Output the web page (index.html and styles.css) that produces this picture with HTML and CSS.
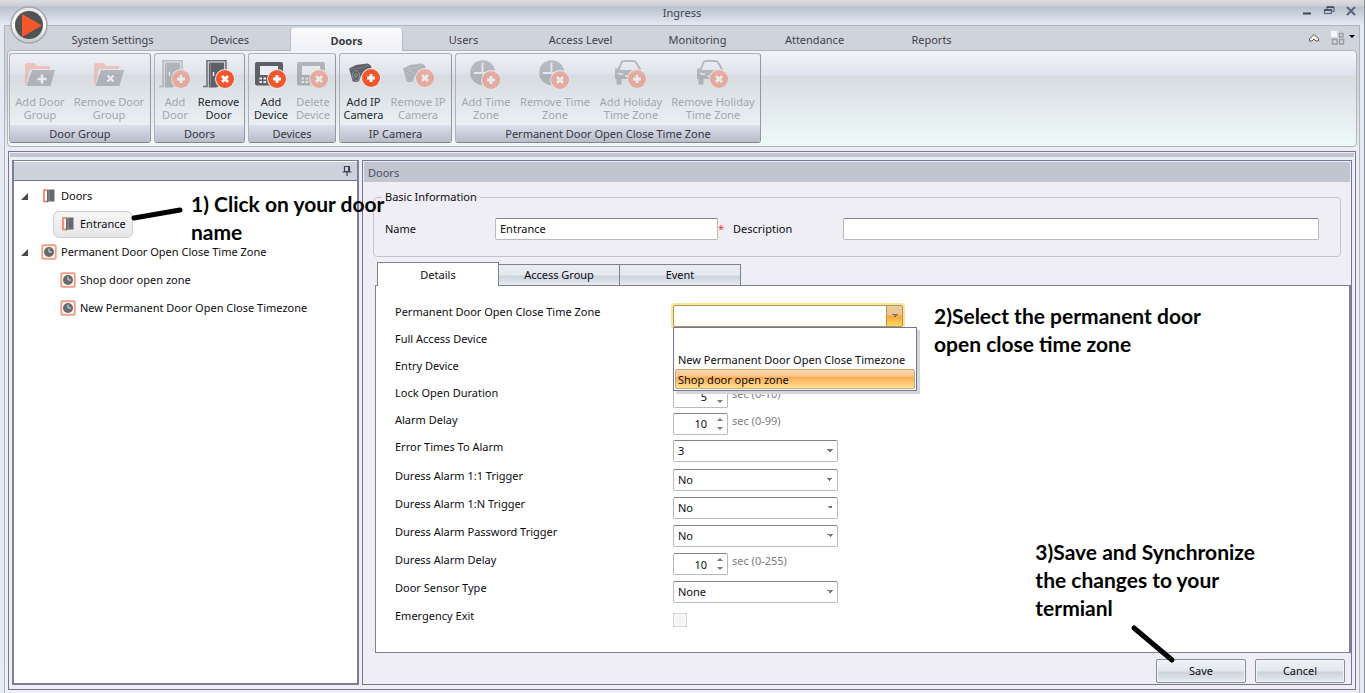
FILE: index.html
```html
<!DOCTYPE html>
<html lang="en">
<head>
<meta charset="utf-8">
<title>Ingress</title>
<link rel="stylesheet" href="styles.css">
</head>
<body>
<svg class="defs" aria-hidden="true">
  <defs>
    <symbol id="b-add" viewBox="0 0 20 20"><circle cx="10" cy="10" r="10" fill="#e8ebf1"/><circle cx="10" cy="10" r="9" fill="#f4562a"/><path d="M10 6v8M6 10h8" stroke="#fff" stroke-width="2.8"/></symbol>
    <symbol id="b-del" viewBox="0 0 20 20"><circle cx="10" cy="10" r="10" fill="#e8ebf1"/><circle cx="10" cy="10" r="9" fill="#f4562a"/><path d="M7 7l6 6M13 7l-6 6" stroke="#fff" stroke-width="2.8"/></symbol>
    <symbol id="folder" viewBox="0 0 32 30"><path d="M1 25V4.500q0-1.500 1.500-1.500h8l2.500 3h13v3H7.500q-1.500 0-2 1.500L2 25z" fill="#f58a6c"/><path d="M8 10h23l-4.500 16H2.500z" fill="#6a6d72"/></symbol>
    <symbol id="door" viewBox="0 0 32 30"><path d="M0 26.500h4V0.800h19V14" fill="none" stroke="#6f7277" stroke-width="1.600"/><path d="M5.800 2.600h15.400V24l-8 3.500H5.800z" fill="#5d6066"/><path d="M7.500 3v24" stroke="#8d9095" stroke-width=".8"/><path d="M10.500 12v4" stroke="#fff" stroke-width="1.400"/></symbol>
    <symbol id="device" viewBox="0 0 32 30"><rect x="0" y="2" width="28" height="23.500" rx="2" fill="#5d6066"/><path d="M5 6h18v6l-4 3H5z" fill="#eceef3"/><path d="M4.500 18.500h2.500M8.500 18.500h2.500M4.500 22h2.500M8.500 22h2.500" stroke="#eceef3" stroke-width="2.200"/></symbol>
    <symbol id="camera" viewBox="0 0 32 30"><path d="M1 8.500L8 5 19 3.500q4 0 5 6l-11 6-2 5.500q-4 2-6.500 0L3 15z" fill="#5d6066"/><path d="M2 9.500l13-2 6-3" fill="none" stroke="#83868b" stroke-width=".8"/><ellipse cx="8" cy="15.500" rx="3.500" ry="5" fill="#5d6066" stroke="#a0a3a8" stroke-width=".8"/><circle cx="8" cy="15.500" r="1.500" fill="none" stroke="#a0a3a8" stroke-width=".8"/></symbol>
    <symbol id="clock" viewBox="0 0 32 30"><circle cx="12.700" cy="12.700" r="12.500" fill="#6a6d72"/><path d="M12.500 2.500v10.500H4M13 13h9" fill="none" stroke="#e8ebf1" stroke-width="1.800"/></symbol>
    <symbol id="car" viewBox="0 0 32 30"><path d="M3.500 10L6.500 2.500Q7 1 9 1h9q2 0 3 1.500L25 9" fill="none" stroke="#6a6d72" stroke-width="2"/><path d="M0 8.500h3l1 1.500h19l1-1.500h2V19H6.500v5.500H1.500V19H0z" fill="#6a6d72"/><path d="M3 13.500l5 1M10 16h10" stroke="#e8ebf1" stroke-width="1.600"/></symbol>
    <symbol id="t-door" viewBox="0 0 16 16"><path d="M7 2H3v11.500h4" fill="none" stroke="#f27a5a" stroke-width="1.600"/><path d="M6 2.500L8 1.500h5.500v12H8L6 14.500z" fill="#66696d"/><path d="M8 2v12" stroke="#989a9d" stroke-width=".8"/></symbol>
    <symbol id="t-clock" viewBox="0 0 16 16"><rect x="1.200" y="1.200" width="13.600" height="13.600" rx="1" fill="#fbf3f1" stroke="#f39a80" stroke-width="1.700"/><circle cx="8" cy="8" r="5" fill="#66696d"/><path d="M8 4.500V8h3" fill="none" stroke="#e4e4e4"/></symbol>
  </defs>
</svg>

<div class="app">
  <header class="titlebar">
    <span class="title">Ingress</span>
    <div class="wincontrols">
      <button aria-label="Minimize"><svg width="12" height="12" viewBox="0 0 12 12"><path d="M2 8.500h8" stroke="#3b4656" stroke-width="2"/></svg></button>
      <button aria-label="Restore"><svg width="12" height="12" viewBox="0 0 12 12"><path d="M4 5V2.500h7v4H9" fill="none" stroke="#5a6b82" stroke-width="1.200"/><rect x="1.500" y="5" width="7" height="3.500" fill="none" stroke="#5a6b82" stroke-width="1.200"/><path d="M3.500 2H11M1 5h8" stroke="#3b4656" stroke-width="1.500"/></svg></button>
      <button aria-label="Close"><svg width="12" height="12" viewBox="0 0 12 12"><path d="M2 2l8 8M10 2l-8 8" stroke="#56657b" stroke-width="2"/></svg></button>
    </div>
  </header>
  <button class="logo" aria-label="Application menu">
    <svg width="40" height="40" viewBox="0 0 40 40"><defs><linearGradient id="ring" x2="0" y2="1"><stop stop-color="#e4e4e4"/><stop offset=".5" stop-color="#fff"/><stop offset="1" stop-color="#c4c5c8"/></linearGradient></defs><circle cx="20" cy="20" r="18" fill="url(#ring)" stroke="#a5a7ac" stroke-width="1.500"/><circle cx="20" cy="20" r="14" fill="#505254"/><path d="M13 9l20 11.500L13 32z" fill="#f4582a"/></svg>
  </button>

  <div class="frame">
    <nav class="tabs">
      <a href="#">System Settings</a><a href="#">Devices</a><a href="#" class="active">Doors</a><a href="#">Users</a><a href="#">Access Level</a><a href="#">Monitoring</a><a href="#">Attendance</a><a href="#">Reports</a>
      <span class="tabtools">
        <button aria-label="Collapse ribbon"><svg width="12" height="10" viewBox="0 0 12 10"><path d="M6 1.500L10.500 6v2H8L6 6 4 8H1.500V6z" fill="#fff6dc" stroke="#4b5563"/></svg></button>
        <button aria-label="View options"><svg width="26" height="16" viewBox="0 0 26 16"><path d="M1 1h6v6H1z" fill="#f8f8f8"/><path d="M9.500 3.500h3.500v3.500H9.500zM2.500 9.500h4.500v4.500H2.500zM9.500 9.500h4v4.500h-4z" fill="#d6d8db" stroke="#9a9ca0" stroke-width="1.400"/><path d="M19 5h6l-3 3z" fill="#000"/></svg></button>
      </span>
    </nav>

    <section class="ribbon">
      <div class="group"><div class="tools">
        <button class="tool w60" disabled><svg class="ico"><use href="#folder"/><path d="M18 14.500v9M13.500 19h9" stroke="#fff" stroke-width="2.600"/></svg>Add Door<br>Group</button>
        <button class="tool w78" disabled><svg class="ico"><use href="#folder"/><path d="M14.500 15.500l6 6M20.500 15.500l-6 6" stroke="#fff" stroke-width="2.400"/></svg>Remove Door<br>Group</button>
      </div><h2>Door Group</h2></div>
      <div class="group"><div class="tools">
        <button class="tool w40" disabled><svg class="ico"><use href="#door"/><use href="#b-add" x="12" y="9" width="20" height="20"/></svg>Add<br>Door</button>
        <button class="tool w47"><svg class="ico"><use href="#door"/><use href="#b-del" x="12" y="9" width="20" height="20"/></svg>Remove<br>Door</button>
      </div><h2>Doors</h2></div>
      <div class="group"><div class="tools">
        <button class="tool w44"><svg class="ico"><use href="#device"/><use href="#b-add" x="12" y="9" width="20" height="20"/></svg>Add<br>Device</button>
        <button class="tool w40" disabled><svg class="ico"><use href="#device"/><use href="#b-del" x="12" y="9" width="20" height="20"/></svg>Delete<br>Device</button>
      </div><h2>Devices</h2></div>
      <div class="group"><div class="tools">
        <button class="tool w47"><svg class="ico"><use href="#camera"/><use href="#b-add" x="13" y="8" width="20" height="20"/></svg>Add IP<br>Camera</button>
        <button class="tool w62" disabled><svg class="ico"><use href="#camera"/><use href="#b-del" x="13" y="8" width="20" height="20"/></svg>Remove IP<br>Camera</button>
      </div><h2>IP Camera</h2></div>
      <div class="group"><div class="tools">
        <button class="tool w60" disabled><svg class="ico"><use href="#clock"/><use href="#b-add" x="11" y="10" width="20" height="20"/></svg>Add Time<br>Zone</button>
        <button class="tool w78" disabled><svg class="ico"><use href="#clock"/><use href="#b-del" x="11" y="10" width="20" height="20"/></svg>Remove Time<br>Zone</button>
        <button class="tool w74" disabled><svg class="ico"><use href="#car"/><use href="#b-add" x="12" y="9" width="20" height="20"/></svg>Add Holiday<br>Time Zone</button>
        <button class="tool w90" disabled><svg class="ico"><use href="#car"/><use href="#b-del" x="12" y="9" width="20" height="20"/></svg>Remove Holiday<br>Time Zone</button>
      </div><h2>Permanent Door Open Close Time Zone</h2></div>
    </section>

    <div class="workspace">
      <div class="strip"></div>
      <div class="panes">
        <aside class="side">
          <div class="sidehead"><svg width="10" height="12" viewBox="0 0 10 12"><path d="M2.500 1.500h5v5h-5zM0.500 7h9M5 7v4" fill="none" stroke="#3f4450" stroke-width="1.200"/><path d="M6 1h2v6H6z" fill="#3f4450"/></svg></div>
          <ul class="tree">
            <li class="root"><i class="arrow"></i><svg class="tico"><use href="#t-door"/></svg>Doors</li>
            <li class="leaf"><span class="node selected"><svg class="tico"><use href="#t-door"/></svg>Entrance</span></li>
            <li class="root"><i class="arrow"></i><svg class="tico"><use href="#t-clock"/></svg>Permanent Door Open Close Time Zone</li>
            <li class="leaf"><span class="node"><svg class="tico"><use href="#t-clock"/></svg>Shop door open zone</span></li>
            <li class="leaf"><span class="node"><svg class="tico"><use href="#t-clock"/></svg>New Permanent Door Open Close Timezone</span></li>
          </ul>
          <div class="callout one"><svg width="54" height="16" viewBox="0 0 54 16"><path d="M3 12L49 4" stroke="#000" stroke-width="5" stroke-linecap="round"/></svg><p>1) Click on your door<br>name</p></div>
        </aside>

        <main class="main">
          <h1>Doors</h1>
          <div class="content">
            <fieldset>
              <legend>Basic Information</legend>
              <label for="name">Name</label>
              <input id="name" class="box namebox" type="text" value="Entrance"><span class="req">*</span>
              <label for="desc">Description</label>
              <input id="desc" class="box descbox" type="text">
            </fieldset>
            <div class="subtabs" role="tablist">
              <button role="tab" aria-selected="true" class="on">Details</button><button role="tab">Access Group</button><button role="tab">Event</button>
            </div>
          </div>
          <form class="details" id="details">
            <div class="row"><label for="pz">Permanent Door Open Close Time Zone</label>
              <div class="combo"><select id="pz" class="box open"><option></option></select>
                <ul class="menu" role="listbox"><li role="option"></li><li role="option">New Permanent Door Open Close Timezone</li><li role="option" class="hot">Shop door open zone</li></ul>
              </div></div>
            <div class="row"><label for="fa">Full Access Device</label><select id="fa" class="box"><option></option></select></div>
            <div class="row"><label for="ed">Entry Device</label><select id="ed" class="box"><option></option></select></div>
            <div class="row"><label for="lo">Lock Open Duration</label><span class="spin"><input id="lo" class="box" type="text" value="5"><i></i></span><span class="unit">sec (0-10)</span></div>
            <div class="row"><label for="ad">Alarm Delay</label><span class="spin"><input id="ad" class="box" type="text" value="10"><i></i></span><span class="unit">sec (0-99)</span></div>
            <div class="row"><label for="et">Error Times To Alarm</label><select id="et" class="box"><option>3</option></select></div>
            <div class="row tall first"><label for="d1">Duress Alarm 1:1 Trigger</label><select id="d1" class="box"><option>No</option></select></div>
            <div class="row tall"><label for="dn">Duress Alarm 1:N Trigger</label><select id="dn" class="box"><option>No</option></select></div>
            <div class="row tall"><label for="dp">Duress Alarm Password Trigger</label><select id="dp" class="box"><option>No</option></select></div>
            <div class="row tall"><label for="dd">Duress Alarm Delay</label><span class="spin"><input id="dd" class="box" type="text" value="10"><i></i></span><span class="unit">sec (0-255)</span></div>
            <div class="row tall"><label for="ds">Door Sensor Type</label><select id="ds" class="box"><option>None</option></select></div>
            <div class="row"><label for="ee">Emergency Exit</label><input id="ee" type="checkbox" disabled></div>
            <div class="callout two"><p>2)Select the permanent door<br>open close time zone</p></div>
          </form>
          <footer class="actions"><button form="details" type="button">Save</button><button type="button">Cancel</button></footer>
          <div class="callout three"><p>3)Save and Synchronize<br>the changes to your<br>termianl</p><svg width="48" height="40" viewBox="0 0 48 40"><path d="M4 4L42 36" stroke="#000" stroke-width="5" stroke-linecap="round"/></svg></div>
        </main>
      </div>
    </div>
  </div>
</div>
</body>
</html>
```
FILE: styles.css
```css
* { box-sizing: border-box; }
body { margin: 0; font: 11px/16px "Noto Sans", "Open Sans", sans-serif; color: #0c0c10; }
button, input, select { font: inherit; color: inherit; margin: 0; }
button { padding: 0; border: 0; background: none; }
ul { list-style: none; margin: 0; padding: 0; }
a { color: inherit; text-decoration: none; }
svg { display: block; flex: none; }
.defs { position: absolute; width: 0; height: 0; }

.app {
  position: relative; min-height: 100vh; display: flex; flex-direction: column;
  padding: 0 4px;
  background: linear-gradient(#dddee1 0, #cdced2 6px, #bac2cf 7px, #e4eaf3 25px, #e6ecf4 100%);
  border-right: 1px solid #8c8e92;
}
.titlebar { height: 25px; display: flex; align-items: center; justify-content: center; position: relative; color: #42464f; }
.wincontrols { position: absolute; right: 3px; top: 5px; display: flex; gap: 10px; }
.logo { position: absolute; left: 9px; top: 5px; z-index: 2; }

.frame { flex: 1; display: flex; flex-direction: column; border: 1px solid #b3b4b8; border-bottom: 0; background: linear-gradient(#cfd3dc 60px, #efeef5 130px); }

.tabs { display: flex; align-items: flex-end; height: 24px; padding-left: 49px; color: #3f424b; }
.tabs a { width: 113px; margin: 0 2px; height: 23px; line-height: 26px; text-align: center; white-space: nowrap; position: relative; }
.tabs .active { margin-bottom: -1px; height: 24px; font-weight: bold; color: #3a3c44; background: linear-gradient(#fbfbfc, #eff0f5); border: 1px solid #b8bcc4; border-top-color: #bfe4e6; border-bottom: 0; border-radius: 4px 4px 0 0; line-height: 25px; z-index: 1; }
.tabtools { margin-left: auto; display: flex; align-items: center; gap: 10px; height: 24px; padding-right: 3px; }

.ribbon {
  margin: 0 2px; height: 97px; display: flex; gap: 3px; padding: 2px 1px 3px;
  border: 1px solid #b2b4b8; border-radius: 4px;
  background: linear-gradient(#f3f4f9, #e0e4ef 24px, #d9dce1 25px, #eefafa);
}
.group { display: flex; flex-direction: column; border: 1px solid #b0b1b6; border-bottom-color: #85868c; border-right-color: #96979c; border-radius: 3px; background: linear-gradient(#eff0f5, #e0e3ec 20px, #d8dbe1 21px, #e8f1f3 72px); overflow: hidden; }
.tools { flex: 1; display: flex; align-items: flex-start; padding: 5px 2px 0 0; }
.tool { line-height: 13px; white-space: nowrap; color: #26292f; text-align: center; }
.tool .ico { margin: 1px auto 5px; }
.ico { width: 32px; height: 30px; overflow: visible; }
.tool:disabled { color: #a3a7af; }
.tool:disabled .ico { opacity: .38; }
.w40 { width: 40px; } .w44 { width: 44px; } .w47 { width: 47px; } .w60 { width: 60px; } .w62 { width: 62px; }
.w74 { width: 74px; } .w78 { width: 78px; } .w90 { width: 90px; }
.group h2 { margin: 0; height: 17px; font-size: 11px; font-weight: normal; line-height: 18px; text-align: center; color: #35373f; background: linear-gradient(#dcdfec, #b9bdc9); }

.workspace { flex: 1; display: flex; flex-direction: column; margin: 4px 3px 3px; border: 1px solid #76749a; background: #efeef5; }
.strip { height: 4px; margin: 1px; background: #c1c5d0; }
.panes { flex: 1; display: flex; gap: 3px; padding: 2px 3px 4px; }

.side { position: relative; flex: none; width: 347px; border: 2px solid #7d7d98; background: #fff; border-top-width: 1px; }
.sidehead { height: 20px; display: flex; align-items: center; justify-content: flex-end; padding-right: 5px; background: #cdd2dd; border-bottom: 1px solid #76788e; border-top: 1px solid #fff; }
.tree { padding: 1px 0 0 7px; }
.tree li { display: flex; align-items: center; height: 28px; white-space: nowrap; }
.tree .leaf { padding-left: 32px; }
.tico { width: 16px; height: 16px; margin-right: 4px; }
.root .tico { margin-left: 13px; }
.arrow { width: 0; height: 0; border: solid transparent; border-width: 0 0 7px 7px; border-bottom-color: #4a4a4c; }
.node { display: flex; align-items: center; height: 27px; padding: 0 6px; border: 1px solid transparent; border-radius: 6px; }
.selected { border-color: #cfcfd1; background: linear-gradient(#f6f6f7, #e6e6e8); }

.main { position: relative; flex: 1; min-width: 0; display: flex; flex-direction: column; border: 1px solid #76749a; background: #efeef5; }
.main h1 { margin: 1px; padding-left: 4px; height: 20px; font-size: 11px; font-weight: normal; line-height: 21px; color: #4c505a; background: #c1c5d0; }
.content { padding: 6px 10px 0; }
fieldset { display: flex; align-items: center; min-width: 0; height: 68px; margin: 0; padding: 0 21px 4px 11px; border: 1px solid #c3c4cb; border-radius: 4px; }
legend { padding: 0 3px; margin-left: -3px; }
fieldset label { width: 110px; }
.box { height: 22px; padding: 0 4px; border: 1px solid #b9babd; border-top-color: #818286; border-radius: 2px; background: #fff; outline: 0; }
.namebox { width: 223px; }
.req { width: 15px; color: #f33; }
.descbox { flex: 1; min-width: 0; }

.subtabs { display: flex; align-items: flex-end; margin: 5px 0 0 4px; height: 23px; }
.subtabs button { width: 122px; margin-right: -1px; height: 21px; border: 1px solid #7e818e; border-bottom: 0; background: linear-gradient(#e9edf2, #e4e9ef 50%, #ccd3db 55%, #e6ebf0); }
.subtabs .on { height: 24px; margin-bottom: -1px; background: #fff; position: relative; z-index: 1; }

.details { position: relative; flex: 1; margin-left: 12px; padding: 16px 19px; border: 1px solid #7e818e; border-right-width: 2px; background: #fff; }
.row { display: flex; align-items: center; height: 27px; }
.tall { height: 28px; }
.first { margin-top: 2px; }
.row label { width: 278px; margin-bottom: 8px; }
.row > .box { width: 165px; }
.row select {
  appearance: none;
  background-repeat: no-repeat;
  background-image: linear-gradient(45deg, transparent 50%, #77797d 50%), linear-gradient(-45deg, transparent 50%, #77797d 50%);
  background-size: 3px 3px;
  background-position: right 7px top 8px, right 4px top 8px;
}
.combo { position: relative; }
.combo .open {
  display: block; width: 230px; border-color: #b09a5a; box-shadow: 0 0 0 2px #fbe49c;
  background-image: linear-gradient(45deg, transparent 50%, #77797d 50%), linear-gradient(-45deg, transparent 50%, #77797d 50%), linear-gradient(#b09a5a, #b09a5a), linear-gradient(#e8cfa8, #f3c184 45%, #fba63a 50%, #ffd95c);
  background-size: 3px 3px, 3px 3px, 1px 100%, 15px 100%;
  background-position: right 7px top 8px, right 4px top 8px, right 15px top 0, right 0 top 0;
}
.menu { position: absolute; left: 0; top: 22px; z-index: 3; min-width: 244px; padding: 1px; border: 1px solid #76749a; background: #fff; box-shadow: 3px 3px 0 #d6d6d8; white-space: nowrap; }
.menu li { height: 20px; padding: 0 2px; line-height: 19px; border: 1px solid transparent; }
.menu .hot { border-color: #c9a878; border-radius: 2px; background: linear-gradient(#f7d7ae, #fbc88a 35%, #f9ac55 40%, #ffe08f); }
.spin { position: relative; }
.spin .box { display: block; width: 55px; padding-right: 20px; text-align: right; }
.spin i::before, .spin i::after { content: ""; position: absolute; right: 5px; border: 3px solid transparent; }
.spin i::before { top: 2px; border-bottom-color: #77797d; }
.spin i::after { bottom: 2px; border-top-color: #77797d; }
.unit { margin: 0 0 6px 4px; color: #7c7d81; }
input[type=checkbox] { appearance: none; width: 14px; height: 14px; border: 1px solid #d2d3d6; background: #f2f3f4; box-shadow: inset 0 0 0 2px #fafafa; }

.actions { display: flex; justify-content: flex-end; gap: 9px; padding: 6px 6px 1px; }
.actions button { width: 90px; height: 24px; border: 1px solid #888c96; border-radius: 2px; background: linear-gradient(#f0f2f6, #e3e8ee 50%, #cbd2da 55%, #e7ecf1); box-shadow: inset 0 0 0 1px #f2f5f8; }

.callout { position: absolute; z-index: 4; color: #000; font: bold 21px/28px Lato, sans-serif; white-space: nowrap; pointer-events: none; }
.callout p { margin: 0; }
.one { display: flex; left: 117px; top: 29px; gap: 6px; }
.one svg { margin-top: 16px; }
.two { left: 558px; top: 16px; }
.three { right: 96px; bottom: 20px; }
.three svg { margin: 2px 0 0 95px; }
```
